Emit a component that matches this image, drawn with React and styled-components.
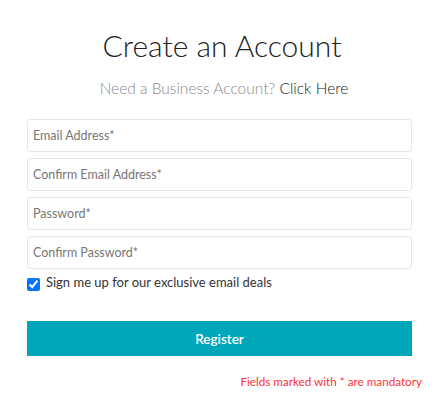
import React from "react";
import styled, { createGlobalStyle } from "styled-components";

const GlobalStyle = createGlobalStyle`
  body {
    margin: 0;
    background: #fff;
    font-family: 'Lato', 'Noto Sans', sans-serif;
  }
`;

const Wrapper = styled.section`
  width: 385px;
  margin: 0 auto;
  padding-top: 27px;
`;

const Title = styled.h1`
  margin: 0;
  padding-left: 5px;
  text-align: center;
  font-size: 30px;
  line-height: 36px;
  font-weight: 300;
  color: #222;
`;

const Sub = styled.p`
  margin: 15px 0 21px;
  padding-left: 9px;
  text-align: center;
  font-size: 15.5px;
  line-height: 20px;
  font-weight: 300;
  color: #8a8a8a;
`;

const Link = styled.a`
  color: #222;
  text-decoration: none;
  cursor: pointer;
`;

const Form = styled.form`
  display: flex;
  flex-direction: column;
`;

const Fields = styled.div`
  display: flex;
  flex-direction: column;
  gap: 6px;
`;

const Field = styled.input`
  box-sizing: border-box;
  width: 100%;
  height: 33px;
  padding: 0 5px;
  border: 1px solid #e6e6e6;
  border-radius: 3px;
  font-family: inherit;
  font-size: 12.5px;
  color: #333;
  outline: none;

  &::placeholder {
    color: #777;
  }
`;

const CheckRow = styled.label`
  display: flex;
  align-items: flex-start;
  gap: 6px;
  margin-top: 4px;
  font-size: 13px;
  line-height: 18px;
  color: #333;
`;

const Check = styled.input`
  width: 13px;
  height: 13px;
  margin: 5px 0 0;
  accent-color: #0075ff;
`;

const Button = styled.button`
  margin-top: 30px;
  height: 35px;
  border: none;
  background: #00a6b9;
  color: #fff;
  font-family: inherit;
  font-size: 13.5px;
  font-weight: 600;
  cursor: pointer;
`;

const Note = styled.p`
  margin: 18px -10px 0 0;
  text-align: right;
  font-size: 11.7px;
  line-height: 14px;
  color: #ff3333;
`;

const fields = [
  "Email Address*",
  "Confirm Email Address*",
  "Password*",
  "Confirm Password*",
];

export default function App() {
  return (
    <Wrapper>
      <GlobalStyle />
      <Title>Create an Account</Title>
      <Sub>
        Need a Business Account? <Link>Click Here</Link>
      </Sub>
      <Form onSubmit={e => e.preventDefault()}>
        <Fields>
          {fields.map(f => (
            <Field
              key={f}
              type={f.includes("Password") ? "password" : "email"}
              placeholder={f}
            />
          ))}
        </Fields>
        <CheckRow>
          <Check type="checkbox" defaultChecked />
          Sign me up for our exclusive email deals
        </CheckRow>
        <Button type="submit">Register</Button>
      </Form>
      <Note>Fields marked with * are mandatory</Note>
    </Wrapper>
  );
}
